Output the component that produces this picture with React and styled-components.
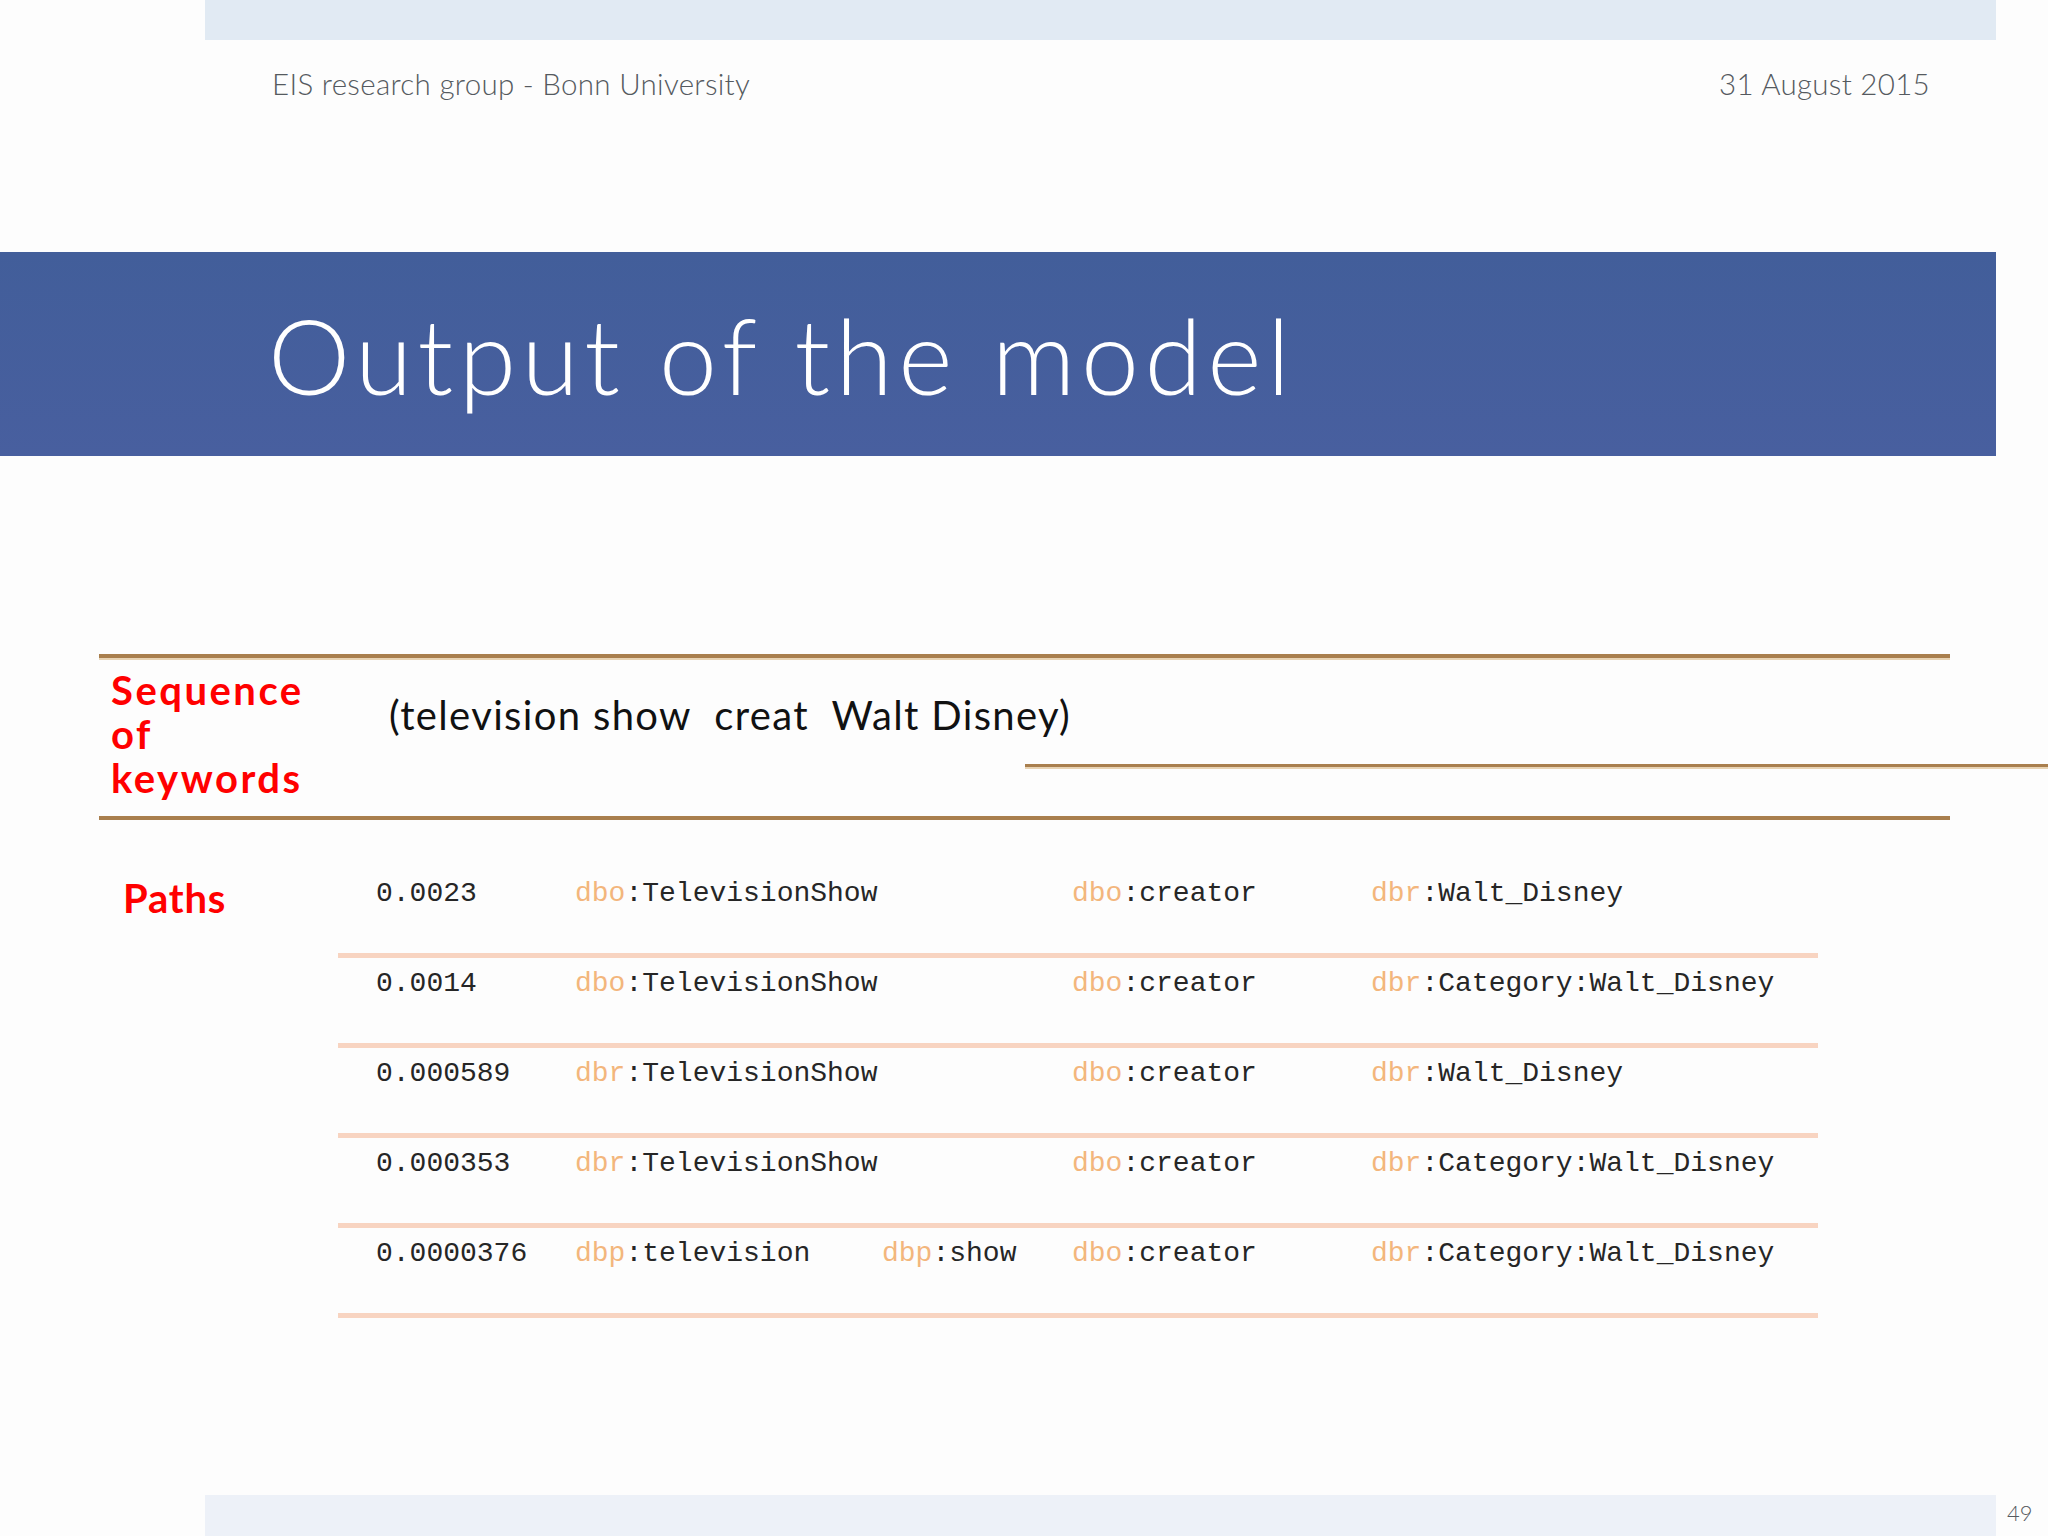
import React from 'react';
import styled, { createGlobalStyle } from 'styled-components';

const GlobalStyle = createGlobalStyle`
    html, body {
        margin: 0;
        padding: 0;
        background: #ffffff;
    }
    body {
        font-family: "Lato", "Liberation Sans", sans-serif;
    }
`;

const paths = [
    { score: '0.0023', first: ['dbo', 'TelevisionShow'], second: null, predicate: ['dbo', 'creator'], target: ['dbr', 'Walt_Disney'] },
    { score: '0.0014', first: ['dbo', 'TelevisionShow'], second: null, predicate: ['dbo', 'creator'], target: ['dbr', 'Category:Walt_Disney'] },
    { score: '0.000589', first: ['dbr', 'TelevisionShow'], second: null, predicate: ['dbo', 'creator'], target: ['dbr', 'Walt_Disney'] },
    { score: '0.000353', first: ['dbr', 'TelevisionShow'], second: null, predicate: ['dbo', 'creator'], target: ['dbr', 'Category:Walt_Disney'] },
    { score: '0.0000376', first: ['dbp', 'television'], second: ['dbp', 'show'], predicate: ['dbo', 'creator'], target: ['dbr', 'Category:Walt_Disney'] }
];

const Term = ({ value }) => {
    if (!value) return <Cell />;
    return (
        <Cell>
            <Prefix>{ value[0] }</Prefix>:{ value[1] }
        </Cell>
    );
};

const App = () => {
    return (
        <React.Fragment>
            <GlobalStyle />
            <Slide>
                <TopBar />
                <Header>
                    <span>EIS research group - Bonn University</span>
                    <span>31 August 2015</span>
                </Header>
                <TitleBand>
                    <Title>Output of the model</Title>
                </TitleBand>
                <Table>
                    <KeywordRow>
                        <Label>Sequence<br />of<br />keywords</Label>
                        <KeywordCell>
                            <Keywords>(television show&nbsp; creat&nbsp; Walt Disney)</Keywords>
                            <StrayRule />
                        </KeywordCell>
                    </KeywordRow>
                    <PathsRow>
                        <Label $indent>Paths</Label>
                        <PathList>
                            {
                                paths.map(path => (
                                    <PathRow key={ path.score }>
                                        <Cell>{ path.score }</Cell>
                                        <Term value={ path.first } />
                                        <Term value={ path.second } />
                                        <Term value={ path.predicate } />
                                        <Term value={ path.target } />
                                    </PathRow>
                                ))
                            }
                        </PathList>
                    </PathsRow>
                </Table>
                <Footer>
                    <FooterBar />
                    <PageNumber>49</PageNumber>
                </Footer>
            </Slide>
        </React.Fragment>
    );
};

export default App;

const Slide = styled.div`
    width: 2048px;
    height: 1536px;
    display: flex;
    flex-direction: column;
    background: #fdfdfd;
    overflow: hidden;
`;
const TopBar = styled.div`
    margin-left: 205px;
    width: 1791px;
    height: 40px;
    background: #e1eaf3;
`;
const Header = styled.div`
    display: flex;
    justify-content: space-between;
    align-items: center;
    height: 86px;
    padding: 0 118px 0 272px;
    font-size: 29.5px;
    font-weight: 300;
    letter-spacing: 0.3px;
    color: #555a60;
`;
const TitleBand = styled.div`
    margin-top: 126px;
    width: 1996px;
    height: 204px;
    display: flex;
    align-items: center;
    background: linear-gradient(180deg, #425e9a 0%, #485f9f 100%);
`;
const Title = styled.h1`
    margin: 0 0 0 268px;
    font-size: 104px;
    font-weight: 300;
    color: #ffffff;
    letter-spacing: 5.5px;
`;
const Table = styled.div`
    margin: 198px 0 0 99px;
    width: 1851px;
    display: flex;
    flex-direction: column;
`;
const KeywordRow = styled.div`
    display: grid;
    grid-template-columns: 239px 1fr;
    height: 158px;
    border-top: 4px solid #a97f4e;
    border-bottom: 4px solid #a97f4e;
    box-shadow: inset 0 2px 0 #e8d3b4;
`;
const Label = styled.div`
    padding: ${ props => props.$indent ? '56px 0 0 24px' : '10px 0 0 12px' };
    font-family: "Lato", "Liberation Sans", sans-serif;
    font-size: 40px;
    font-weight: 700;
    line-height: 44px;
    letter-spacing: ${ props => props.$indent ? '0.8px' : '2.5px' };
    color: #ff0000;
`;
const KeywordCell = styled.div`
    display: flex;
    flex-direction: column;
    padding: 34px 0 0 51px;
`;
const Keywords = styled.div`
    font-size: 40px;
    font-weight: 400;
    line-height: 46px;
    letter-spacing: 1.35px;
    color: #111111;
    white-space: pre;
`;
const StrayRule = styled.div`
    margin: 26px 0 0 636px;
    width: 1100px;
    height: 3px;
    background: #a97f4e;
    box-shadow: 0 2px 0 #e8d3b4;
`;
const PathsRow = styled.div`
    display: grid;
    grid-template-columns: 239px 1fr;
`;
const PathList = styled.div`
    width: 1480px;
    padding-top: 48px;
    display: flex;
    flex-direction: column;
`;
const PathRow = styled.div`
    display: grid;
    grid-template-columns: 199px 307px 190px 299px 1fr;
    height: 90px;
    padding: 9px 0 0 38px;
    box-sizing: border-box;
    border-bottom: 5px solid #f8d4c1;
`;
const Cell = styled.div`
    font-family: "Liberation Mono", "Courier New", monospace;
    font-size: 28px;
    line-height: 34px;
    color: #262626;
    white-space: pre;
`;
const Prefix = styled.span`
    color: #f3b67c;
`;
const Footer = styled.div`
    margin-top: auto;
    display: flex;
    align-items: center;
    height: 41px;
`;
const FooterBar = styled.div`
    margin-left: 205px;
    width: 1791px;
    height: 41px;
    background: #edf1f8;
`;
const PageNumber = styled.div`
    margin: 0 0 6px 11px;
    font-size: 22px;
    font-weight: 300;
    color: #555a60;
`;
